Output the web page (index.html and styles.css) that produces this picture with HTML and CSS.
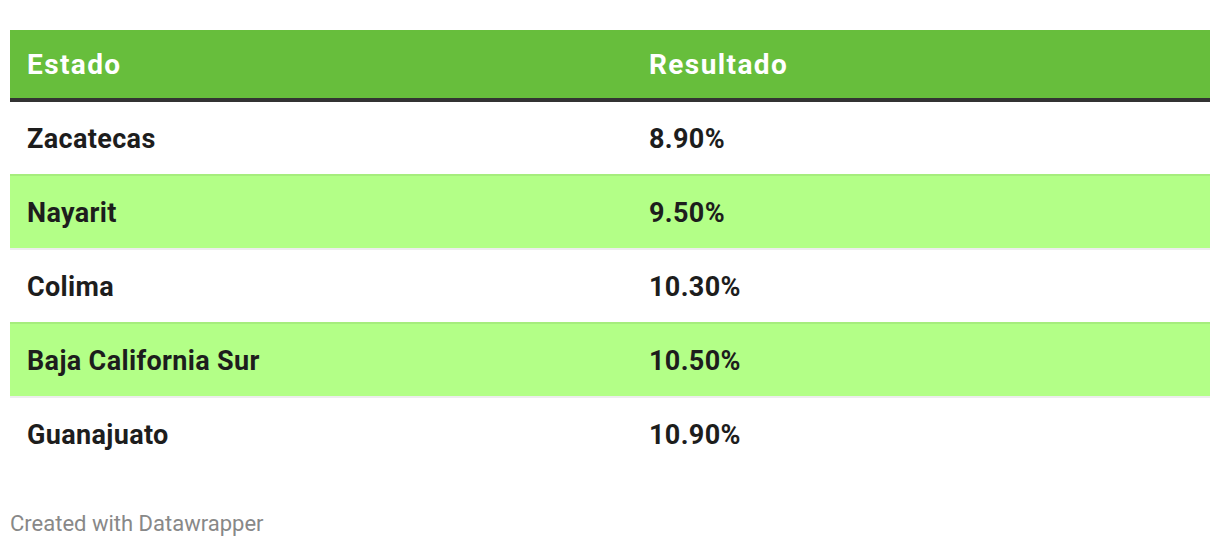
FILE: index.html
```html
<!DOCTYPE html>
<html lang="es">
<head>
<meta charset="utf-8">
<title>Tabla</title>
<link rel="stylesheet" href="styles.css">
</head>
<body>
<div class="chart">
  <table class="data">
    <thead>
      <tr>
        <th class="col-a">Estado</th>
        <th class="col-b">Resultado</th>
      </tr>
    </thead>
    <tbody>
      <tr><td>Zacatecas</td><td>8.90%</td></tr>
      <tr class="hl"><td>Nayarit</td><td>9.50%</td></tr>
      <tr><td>Colima</td><td>10.30%</td></tr>
      <tr class="hl"><td>Baja California Sur</td><td>10.50%</td></tr>
      <tr><td>Guanajuato</td><td>10.90%</td></tr>
    </tbody>
  </table>
  <div class="footer">Created with Datawrapper</div>
</div>
</body>
</html>
```
FILE: styles.css
```css
html, body {
  margin: 0;
  padding: 0;
  background: #ffffff;
}
.chart {
  padding: 30px 10px 0 10px;
  font-family: Roboto, "Liberation Sans", sans-serif;
}
.data {
  width: 1200px;
  border-collapse: separate;
  border-spacing: 0;
  table-layout: fixed;
}
.data th {
  background: #67be3c;
  color: #ffffff;
  font-weight: 700;
  font-size: 28px;
  letter-spacing: 1.4px;
  text-align: left;
  padding: 0 17px;
  border-bottom: 4px solid #333333;
  box-sizing: border-box;
  height: 72px;
  vertical-align: middle;
}
.data th.col-a {
  width: 622px;
}
.data td {
  color: #1d1d1d;
  font-weight: 700;
  font-size: 27px;
  letter-spacing: 0.35px;
  padding: 1px 17px 0 17px;
  height: 72px;
  box-sizing: border-box;
  vertical-align: middle;
  border-top: 2px solid rgba(0, 0, 0, 0.07);
}
.data tbody tr:first-child td {
  border-top: none;
}
.data tbody tr:not(:first-child) td {
  height: 74px;
}
.data tr.hl td {
  background: #b3ff87;
}
.footer {
  margin-top: 41px;
  color: #888888;
  font-size: 22px;
  letter-spacing: 0;
}
```
